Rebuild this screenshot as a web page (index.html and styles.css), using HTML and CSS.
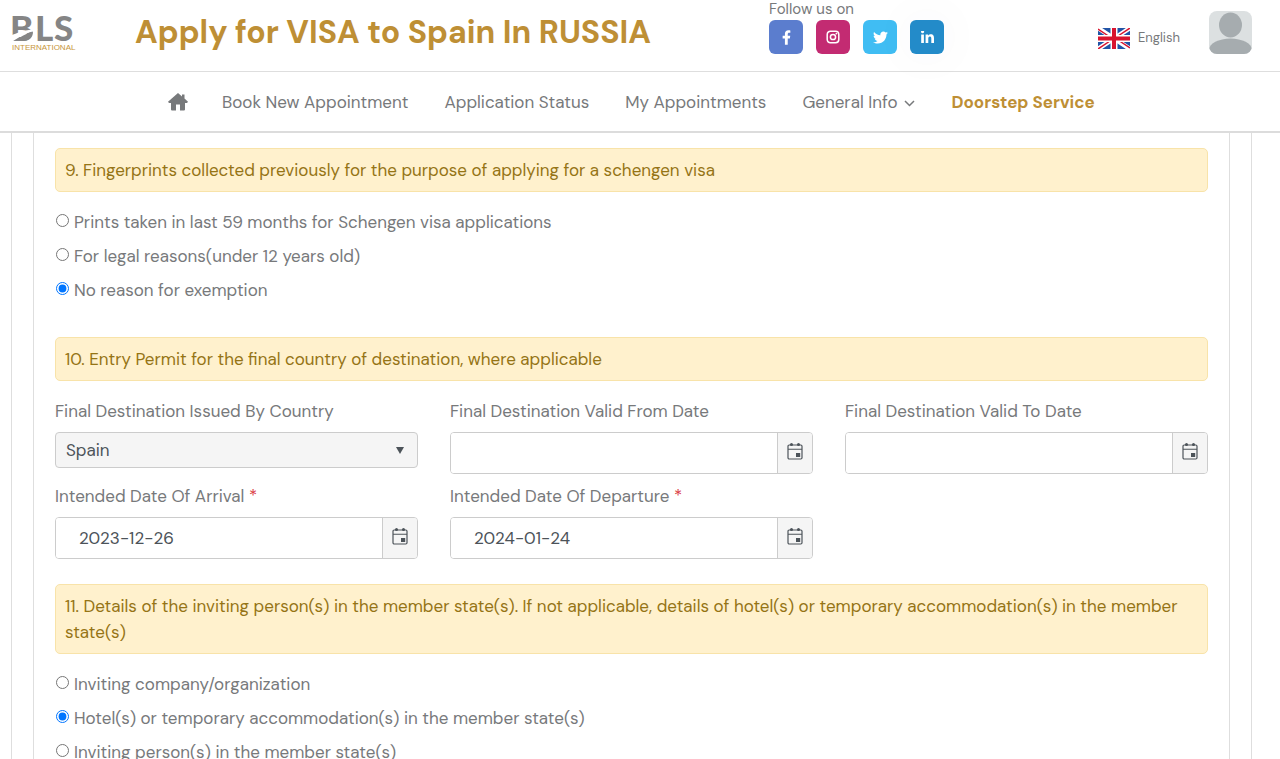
FILE: index.html
```html
<!DOCTYPE html>
<html lang="en">
<head>
<meta charset="utf-8">
<meta name="viewport" content="width=device-width, initial-scale=1">
<title>Apply for VISA to Spain In RUSSIA</title>
<link rel="stylesheet" href="styles.css">
</head>
<body>
<svg class="defs" width="0" height="0" aria-hidden="true">
  <symbol id="calendar" viewBox="0 0 16 18">
    <rect x="1" y="3" width="14" height="14" rx="1.2" fill="none" stroke="#4c5359" stroke-width="1.2"/>
    <path d="M1 7.2h14" stroke="#4c5359" stroke-width="1.1"/>
    <circle cx="4.5" cy="2.6" r="1.5" fill="#4c5359"/>
    <circle cx="11.5" cy="2.6" r="1.5" fill="#4c5359"/>
    <rect x="9" y="11" width="4.2" height="4" fill="#4c5359"/>
  </symbol>
</svg>

<header class="topbar">
  <a class="logo" href="#" aria-label="BLS International">
    <svg width="66" height="40" viewBox="0 0 66 40">
      <text class="logo-main" x="-2 23 42" y="28">BLS</text>
      <path d="M-1 22.500 C5 20 11 17.500 20 16.500 L26 16.500 C16 19.500 8 23 -1 29.500Z" fill="#fff"/>
      <path d="M3 28 C8 24 14 20.500 21 18.500 C21 25 17 28 10 28Z" fill="#858585"/>
      <text class="logo-sub" x="0" y="37">INTERNATIONAL</text>
    </svg>
  </a>
  <h1 class="title">Apply for VISA to Spain In RUSSIA</h1>
  <div class="follow">
    <span class="follow-label">Follow us on</span>
    <div class="socials">
      <a class="social facebook" href="#" aria-label="Facebook"><svg width="9" height="15" viewBox="0 0 320 512"><path fill="#fff" d="M279 288l14-93h-89v-60c0-25 12-50 52-50h41V7s-37-7-72-7c-73 0-121 44-121 125v70H23v93h81v224h100V288z"/></svg></a>
      <a class="social instagram" href="#" aria-label="Instagram"><svg width="14" height="14" viewBox="0 0 14 14"><rect x="1.200" y="1.200" width="11.600" height="11.600" rx="3.200" fill="none" stroke="#fff" stroke-width="1.500"/><circle cx="7" cy="7" r="2.600" fill="none" stroke="#fff" stroke-width="1.500"/><circle cx="10.400" cy="3.600" r=".9" fill="#fff"/></svg></a>
      <a class="social twitter" href="#" aria-label="Twitter"><svg width="15" height="15" viewBox="0 0 512 512"><path fill="#fff" d="M459.400 151.700c.3 4.500.3 9.100.3 13.600 0 138.700-105.600 298.600-298.600 298.600-59.500 0-114.700-17.200-161.100-47.100 8.400 1 16.600 1.300 25.300 1.300 49.100 0 94.200-16.600 130.300-44.800-46.100-1-84.800-31.200-98.100-72.800 6.500 1 13 1.600 19.800 1.600 9.400 0 18.800-1.300 27.600-3.600-48.100-9.700-84.100-52-84.100-103v-1.300c14 7.800 30.200 12.700 47.400 13.300-28.300-18.800-46.800-51-46.800-87.400 0-19.500 5.200-37.400 14.300-53 51.700 63.700 129.300 105.300 216.400 109.800-1.600-7.800-2.600-15.900-2.600-24 0-57.800 46.800-104.900 104.900-104.900 30.200 0 57.500 12.700 76.700 33.100 23.700-4.500 46.500-13.300 66.600-25.300-7.800 24.400-24.400 44.800-46.100 57.800 21.100-2.300 41.600-8.100 60.400-16.200-14.300 20.800-32.200 39.300-52.600 54.300z"/></svg></a>
      <a class="social linkedin" href="#" aria-label="LinkedIn"><svg width="13" height="13" viewBox="0 0 448 448"><path fill="#fff" d="M100 416H7V117h93zM54 76C24 76 0 52 0 22S24-32 54-32s54 24 54 54-24 54-54 54zM448 416h-93V270c0-35-1-79-48-79-49 0-56 38-56 77v148h-93V117h89v41h1c13-24 43-48 88-48 94 0 112 62 112 142z"/></svg></a>
    </div>
  </div>
  <a class="language" href="#">
    <svg width="32" height="21" viewBox="0 0 32 21">
      <rect width="32" height="21" fill="#2254a6"/>
      <path d="M0 0L32 21M32 0L0 21" stroke="#fff" stroke-width="4.500"/>
      <path d="M0 1L12 9M32 0L20 8M0 21L12 13M32 20L20 12" stroke="#d8142f" stroke-width="1.500"/>
      <path d="M16 0V21M0 10.500H32" stroke="#fff" stroke-width="7"/>
      <path d="M16 0V21M0 10.500H32" stroke="#d8142f" stroke-width="4"/>
    </svg>
    <span>English</span>
  </a>
  <a class="avatar" href="#" aria-label="Account">
    <svg width="43" height="43" viewBox="0 0 43 43">
      <rect width="43" height="43" fill="#dce0e1"/>
      <ellipse cx="21.500" cy="14" rx="11.500" ry="12.500" fill="#a6acaf"/>
      <ellipse cx="21.500" cy="39" rx="21.500" ry="11.500" fill="#a6acaf"/>
    </svg>
  </a>
</header>

<nav class="nav">
  <a class="home" href="#" aria-label="Home"><svg width="20" height="18" viewBox="0 0 20 18"><path fill="#77797b" d="M10 0L0 8.700L1 10H3V16.500Q3 17.500 4 17.500H8V11.500H12V17.500H16Q17 17.500 17 16.500V10H19L20 8.700L16.500 5.600V1.500H14V3.500Z"/></svg></a>
  <a href="#">Book New Appointment</a>
  <a href="#">Application Status</a>
  <a href="#">My Appointments</a>
  <a class="dropdown" href="#">General Info <svg width="11" height="7" viewBox="0 0 11 7"><path d="M1 1L5.500 5.500L10 1" fill="none" stroke="#77797b" stroke-width="1.500"/></svg></a>
  <a class="doorstep" href="#">Doorstep Service</a>
</nav>

<main class="outer">
  <form class="panel">
    <h2 class="section">9. Fingerprints collected previously for the purpose of applying for a schengen visa</h2>
    <div class="options">
      <label class="option"><input type="radio" name="prints"><span>Prints taken in last 59 months for Schengen visa applications</span></label>
      <label class="option"><input type="radio" name="prints"><span>For legal reasons(under 12 years old)</span></label>
      <label class="option"><input type="radio" name="prints" checked><span>No reason for exemption</span></label>
    </div>

    <h2 class="section">10. Entry Permit for the final country of destination, where applicable</h2>
    <div class="fields">
      <div class="field">
        <label for="country">Final Destination Issued By Country</label>
        <select id="country"><option>Spain</option></select>
      </div>
      <div class="field">
        <label for="from">Final Destination Valid From Date</label>
        <div class="date"><input id="from" type="text"><button type="button" aria-label="Open calendar"><svg width="16" height="18"><use href="#calendar"/></svg></button></div>
      </div>
      <div class="field">
        <label for="to">Final Destination Valid To Date</label>
        <div class="date"><input id="to" type="text"><button type="button" aria-label="Open calendar"><svg width="16" height="18"><use href="#calendar"/></svg></button></div>
      </div>
      <div class="field">
        <label for="arrival">Intended Date Of Arrival <span class="required">*</span></label>
        <div class="date"><input id="arrival" type="text" value="2023-12-26"><button type="button" aria-label="Open calendar"><svg width="16" height="18"><use href="#calendar"/></svg></button></div>
      </div>
      <div class="field">
        <label for="departure">Intended Date Of Departure <span class="required">*</span></label>
        <div class="date"><input id="departure" type="text" value="2024-01-24"><button type="button" aria-label="Open calendar"><svg width="16" height="18"><use href="#calendar"/></svg></button></div>
      </div>
    </div>

    <h2 class="section">11. Details of the inviting person(s) in the member state(s). If not applicable, details of hotel(s) or temporary accommodation(s) in the member state(s)</h2>
    <div class="options">
      <label class="option"><input type="radio" name="host"><span>Inviting company/organization</span></label>
      <label class="option"><input type="radio" name="host" checked><span>Hotel(s) or temporary accommodation(s) in the member state(s)</span></label>
      <label class="option"><input type="radio" name="host"><span>Inviting person(s) in the member state(s)</span></label>
    </div>
  </form>
</main>
</body>
</html>
```
FILE: styles.css
```css
* { box-sizing: border-box; }
body {
  margin: 0;
  background: #fff;
  color: #77797b;
  font: 17px/26px "DM Sans", Inter, sans-serif;
}
a { color: inherit; text-decoration: none; }
svg { display: block; }
.defs { position: absolute; }

.topbar {
  display: flex;
  align-items: center;
  height: 72px;
  padding: 0 28px 0 12px;
  border-bottom: 1px solid #dedede;
}
.logo { width: 123px; padding-bottom: 6px; }
.logo svg { overflow: visible; }
.logo-main { font: 900 35px Lato, sans-serif; fill: #858585; }
.logo-sub { font: 8px "Liberation Sans", sans-serif; fill: #c7963c; }
.title {
  margin: 0;
  padding-bottom: 7px;
  color: #be8f35;
  font-size: 32px;
  line-height: 40px;
  font-weight: 700;
  white-space: nowrap;
  width: 634px;
}
.follow {
  align-self: flex-start;
  padding-right: 30px;
}
.follow-label { display: block; font-size: 15px; line-height: 18px; padding-bottom: 2px; }
.socials { display: flex; gap: 13px; padding-bottom: 17px; }
.social {
  display: flex;
  align-items: center;
  justify-content: center;
  width: 34px;
  height: 34px;
  border-radius: 6px;
}
.facebook { background: #5b7dce; }
.instagram { background: #c32b72; }
.twitter { background: #40bdf3; }
.linkedin { background: #238bc9; box-shadow: 0 0 50px rgba(40, 50, 110, 0.05); }
.language {
  display: flex;
  align-items: center;
  gap: 8px;
  margin-left: auto;
  padding-top: 5px;
  font-size: 13px;
}
.avatar { margin-left: 29px; padding-bottom: 6px; }
.avatar svg { border-radius: 8px; }

.nav {
  display: flex;
  align-items: center;
  gap: 36px;
  height: 61px;
  padding: 0 168px;
  border-bottom: 2px solid #dcdcdc;
  background: #fff;
  white-space: nowrap;
}
.home { margin-right: -2px; }
.dropdown { display: flex; align-items: center; gap: 7px; }
.dropdown svg { margin-top: 4px; }
.doorstep { color: #be8f35; font-weight: 700; }

.outer {
  margin: 0 28px 0 11px;
  padding: 0 21px;
  border: solid #dedede;
  border-width: 0 1px;
}
.panel {
  padding: 15px 21px;
  border: solid #dedede;
  border-width: 0 1px;
}
.section {
  margin: 0;
  padding: 8px 9px;
  border: 1px solid #f8e3a9;
  border-radius: 5px;
  background: #fff1cd;
  color: #957415;
  font-size: 17px;
  line-height: 26px;
  font-weight: 400;
}
.options { display: grid; gap: 8px; padding: 17px 0 34px; }
.option { display: flex; }
.option input { width: 13px; height: 13px; margin: 5px 5px 0 1px; }

.fields {
  display: grid;
  grid-template-columns: repeat(3, 1fr);
  gap: 9px 32px;
  padding: 17px 0 25px;
}
.field label { display: block; padding-bottom: 8px; }
.required { color: #d9363e; }
select {
  display: block;
  width: 100%;
  height: 36px;
  padding: 0 10px;
  border: 1px solid #ccc;
  border-radius: 4px;
  appearance: none;
  background: url("data:image/svg+xml,%3Csvg xmlns='http://www.w3.org/2000/svg' width='8' height='7'%3E%3Cpath d='M0 0H8L4 7Z' fill='%234c5359'/%3E%3C/svg%3E") no-repeat right 13px center #f5f5f5;
  color: #4c5359;
  font: inherit;
}
.date {
  display: flex;
  height: 42px;
  border: 1px solid #ccc;
  border-radius: 4px;
  overflow: hidden;
}
.date input {
  flex: 1;
  min-width: 0;
  padding: 0 23px;
  border: 0;
  background: #fff;
  color: #4c5359;
  font: inherit;
}
.date button {
  display: flex;
  justify-content: center;
  width: 35px;
  padding: 9px 0 0;
  border: 0;
  border-left: 1px solid #ccc;
  background: #f5f5f5;
}
```
